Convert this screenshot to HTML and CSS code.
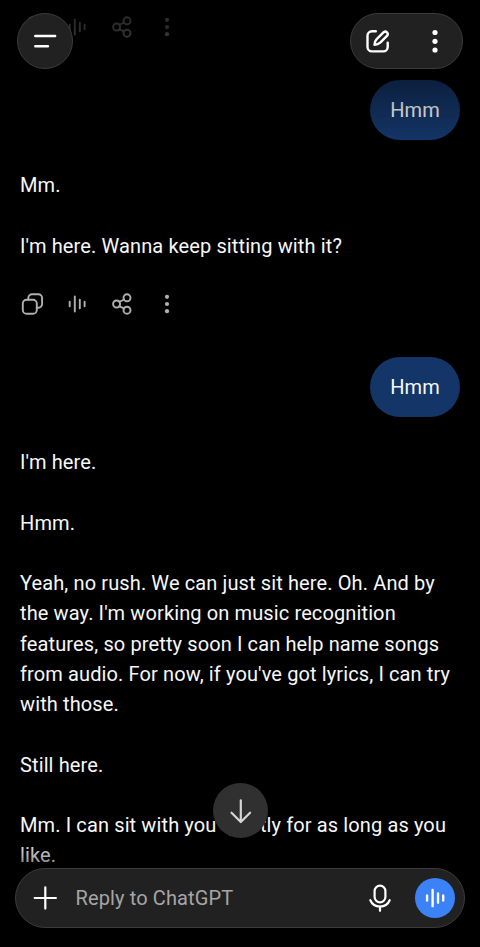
FILE: index.html
```html
<!DOCTYPE html>
<html lang="en">
<head>
<meta charset="utf-8">
<title>Chat</title>
<link rel="stylesheet" href="styles.css">
</head>
<body>
<svg class="defs" width="0" height="0">
  <symbol id="copy" viewBox="0 0 24 24"><path d="M8.300 7.700V6a3.800 3.800 0 0 1 3.800-3.800h6.200A3.800 3.800 0 0 1 22.100 6v6a3.800 3.800 0 0 1-3.800 3.800h-1.500"/><rect x="2.800" y="7.700" width="14" height="14" rx="3.800"/></symbol>
  <symbol id="wave" viewBox="0 0 24 24"><path d="M4.700 9.700v4.600M9.800 4.500v15M14.800 7.700v8.600M19.600 9.700v4.600"/></symbol>
  <symbol id="share" viewBox="0 0 24 24"><circle cx="6.600" cy="12" r="3.500"/><circle cx="17" cy="5.800" r="3.500"/><circle cx="17" cy="18.200" r="3.500"/><path d="M9.200 9.700c2-.6 3.500-1.300 4.900-2.200M9.200 14.300c2 .6 3.500 1.300 4.900 2.200"/></symbol>
  <symbol id="dots" viewBox="0 0 24 24"><g fill="currentColor" stroke="none"><circle cx="12" cy="4.800" r="2.100"/><circle cx="12" cy="12" r="2.100"/><circle cx="12" cy="19.200" r="2.100"/></g></symbol>
</svg>

<main class="chat">
  <div class="actions">
    <svg><use href="#copy"/></svg><svg><use href="#wave"/></svg><svg><use href="#share"/></svg><svg><use href="#dots"/></svg>
  </div>
  <div class="bubble">Hmm</div>
  <div class="reply">
    <p>Mm.</p>
    <p>I'm here. Wanna keep sitting with it?</p>
  </div>
  <div class="actions">
    <svg><use href="#copy"/></svg><svg><use href="#wave"/></svg><svg><use href="#share"/></svg><svg><use href="#dots"/></svg>
  </div>
  <div class="bubble">Hmm</div>
  <div class="reply">
    <p>I'm here.</p>
    <p>Hmm.</p>
    <p>Yeah, no rush. We can just sit here. Oh. And by<br>the way. I'm working on music recognition<br>features, so pretty soon I can help name songs<br>from audio. For now, if you've got lyrics, I can try<br>with those.</p>
    <p>Still here.</p>
    <p>Mm. I can sit with you quietly for as long as you<br>like.</p>
  </div>
</main>

<div class="fade fade-top"></div>
<div class="fade fade-bottom"></div>

<header class="topbar">
  <button class="menu" aria-label="Menu"><svg width="28" height="28" viewBox="0 0 28 28"><path d="M4.300 9.100h19.800M4.300 19.200h12.600"/></svg></button>
  <div class="tools">
    <button aria-label="New chat"><svg width="28" height="28" viewBox="0 0 28 28"><path d="M11.800 4.200H8a4.500 4.500 0 0 0-4.500 4.500v11.200a4.500 4.500 0 0 0 4.500 4.500h11.200a4.500 4.500 0 0 0 4.500-4.500v-4.200"/><path d="M10.500 17.700c.1-2.300.7-4 2.200-5.500l7-7a2.500 2.500 0 0 1 3.500 3.500l-7 7c-1.600 1.500-3.400 2-5.700 2z"/></svg></button>
    <button aria-label="More"><svg width="28" height="28" viewBox="0 0 28 28"><g fill="currentColor" stroke="none"><circle cx="14" cy="5.500" r="2.600"/><circle cx="14" cy="14.300" r="2.600"/><circle cx="14" cy="23" r="2.600"/></g></svg></button>
  </div>
</header>

<button class="down" aria-label="Scroll down"><svg width="28" height="28" viewBox="0 0 28 28"><path d="M13.800 3.300v21.500M4.500 15.700l9.300 9.300 9.300-9.300"/></svg></button>

<footer class="composer">
  <svg width="28" height="28" viewBox="0 0 28 28"><path d="M14.300 3.400v21.200M3.700 14h21.200"/></svg>
  <span class="hint">Reply to ChatGPT</span>
  <svg class="mic" width="28" height="28" viewBox="0 0 28 28"><rect x="8.600" y="1.700" width="10.800" height="16.600" rx="5.400"/><path d="M4.300 16.200a10.600 10.600 0 0 0 19.400 0M14 22.400v4.400"/></svg>
  <button class="voice" aria-label="Voice"><svg width="26" height="26"><use href="#wave"/></svg></button>
</footer>
</body>
</html>
```
FILE: styles.css
```css
* { box-sizing: border-box; }

body {
  margin: 0;
  height: 947px;
  overflow: hidden;
  background: #000;
  color: #f7f7f7;
  font: 20px/30.23px Roboto, "Liberation Sans", sans-serif;
  letter-spacing: 0.12px;
}

.defs { position: absolute; }

svg {
  display: block;
  flex: none;
  fill: none;
  stroke: currentColor;
  stroke-width: 2.2;
  stroke-linecap: round;
  stroke-linejoin: round;
}

button {
  display: flex;
  align-items: center;
  justify-content: center;
  padding: 0;
  border: 0;
  background: none;
  color: #fff;
}

.chat {
  display: flex;
  flex-direction: column;
  padding: 15px 20px 0;
}

.actions {
  display: flex;
  gap: 21px;
  height: 24px;
  color: #b0b0b0;
}

.actions svg {
  width: 24px;
  height: 24px;
  stroke-width: 1.9;
}

.bubble {
  align-self: flex-end;
  width: 90px;
  height: 60px;
  margin-top: 41px;
  border-radius: 30px;
  background: #143567;
  line-height: 60px;
  text-align: center;
}

.reply { padding-top: 30.4px; }

.reply p {
  margin: 0 0 30.23px;
  white-space: nowrap;
}

.reply + .actions { margin-top: 0.6px; }

.fade {
  position: fixed;
  left: 0;
  right: 0;
}

.fade-top {
  top: 0;
  height: 140px;
  background: linear-gradient(rgba(0, 0, 0, .75) 20%, rgba(0, 0, 0, .4) 57%, transparent);
}

.fade-bottom {
  bottom: 0;
  height: 107px;
  background: linear-gradient(transparent, rgba(0, 0, 0, .42) 22%, #000 75%);
}

.topbar {
  position: fixed;
  top: 13px;
  left: 17px;
  right: 17px;
  display: flex;
  justify-content: space-between;
}

.menu,
.tools {
  height: 56px;
  border: 1px solid #3b3b3b;
  border-radius: 28px;
  background: #212121;
}

.menu { width: 56px; }
.menu svg { stroke-width: 2.5; }

.tools {
  display: flex;
  align-items: center;
  justify-content: space-between;
  width: 113px;
  padding: 0 13px;
}

.tools svg { stroke-width: 2.4; }

.down {
  position: fixed;
  top: 783px;
  left: 213px;
  width: 55px;
  height: 55px;
  border-radius: 50%;
  background: #303030;
  color: #d5d5d5;
}

.composer {
  position: fixed;
  top: 868px;
  left: 15px;
  right: 15px;
  display: flex;
  align-items: center;
  height: 60px;
  padding: 0 9px 0 15px;
  border: 1px solid #3b3b3b;
  border-radius: 30px;
  background: #212121;
  color: #fff;
}

.hint {
  flex: 1;
  padding-left: 16.5px;
  color: #a6a6a6;
}

.mic { margin-right: 21px; }

.voice {
  width: 40px;
  height: 40px;
  border-radius: 50%;
  background: #3c82f7;
}
```
